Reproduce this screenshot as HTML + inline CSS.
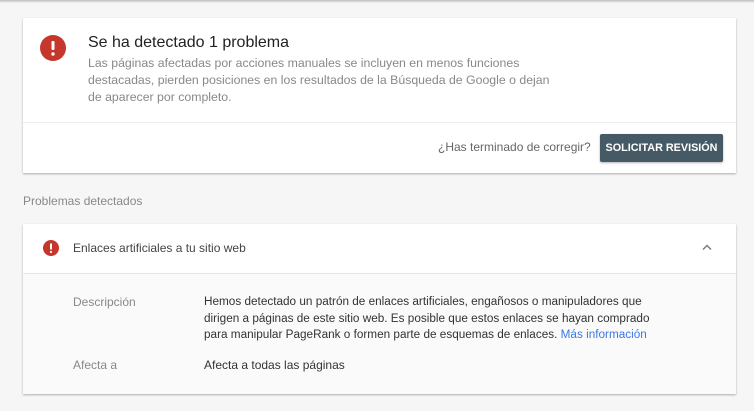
<!DOCTYPE html>
<html><head><meta charset="utf-8"><style>
*{margin:0;padding:0;box-sizing:border-box}
body{width:754px;height:411px;background:#f6f6f6;font-family:"Liberation Sans",sans-serif;position:relative;overflow:hidden}
.top{position:absolute;left:0;top:0;width:754px;height:3px;background:linear-gradient(#bdbdbd,#f6f6f6)}
.card{position:absolute;left:23px;width:713px;background:#fff;box-shadow:0 1px 2px rgba(0,0,0,.3)}
.a{position:absolute;white-space:nowrap}
</style></head><body>
<div class="top"></div>
<div class="card" style="top:18px;height:155px">
  <svg class="a" style="left:17px;top:17px" width="26" height="26"><circle cx="13" cy="13" r="13" fill="#c5372c"/><rect x="11.5" y="6" width="3" height="9" rx="1" fill="#fff"/><circle cx="13" cy="19" r="1.7" fill="#fff"/></svg>
  <div class="a" style="left:65px;top:16px;font-size:16px;color:#222">Se ha detectado 1 problema</div>
  <div class="a" style="left:65px;top:37px;font-size:12.3px;line-height:17px;color:#888">Las páginas afectadas por acciones manuales se incluyen en menos funciones<br>destacadas, pierden posiciones en los resultados de la Búsqueda de Google o dejan<br>de aparecer por completo.</div>
  <div class="a" style="left:0;top:104px;width:713px;height:1px;background:#eee"></div>
  <div class="a" style="left:415px;top:122px;font-size:12px;color:#666">¿Has terminado de corregir?</div>
  <div class="a" style="left:577px;top:116px;width:123px;height:28px;background:#455a64;border-radius:2px;box-shadow:0 1px 2px rgba(0,0,0,.3);color:#fff;font-size:10.8px;font-weight:bold;line-height:28px;text-align:center">SOLICITAR REVISIÓN</div>
</div>
<div class="a" style="left:23px;top:194px;font-size:12px;color:#888">Problemas detectados</div>
<div class="card" style="top:224px;height:170px;background:#fafafa">
  <div class="a" style="left:0;top:0;width:713px;height:50px;background:#fff;border-bottom:1px solid #e6e6e6"></div>
  <svg class="a" style="left:20px;top:16px" width="16" height="16"><circle cx="8" cy="8" r="8" fill="#c5372c"/><rect x="7" y="3.5" width="2" height="6" fill="#fff"/><circle cx="8" cy="12" r="1.1" fill="#fff"/></svg>
  <div class="a" style="left:50px;top:17px;font-size:12px;color:#444">Enlaces artificiales a tu sitio web</div>
  <svg class="a" style="left:679px;top:20px" width="10" height="7"><path d="M1 5.5L5 1.5L9 5.5" stroke="#777" stroke-width="1.4" fill="none"/></svg>
  <div class="a" style="left:50px;top:71px;font-size:12px;color:#888">Descripción</div>
  <div class="a" style="left:181px;top:70px;font-size:11.75px;line-height:16.5px;color:#333">Hemos detectado un patrón de enlaces artificiales, engañosos o manipuladores que<br>dirigen a páginas de este sitio web. Es posible que estos enlaces se hayan comprado<br>para manipular PageRank o formen parte de esquemas de enlaces. <span style="color:#3b78e7">Más información</span></div>
  <div class="a" style="left:50px;top:134px;font-size:12px;color:#888">Afecta a</div>
  <div class="a" style="left:181px;top:134px;font-size:12px;color:#333">Afecta a todas las páginas</div>
</div>
</body></html>
